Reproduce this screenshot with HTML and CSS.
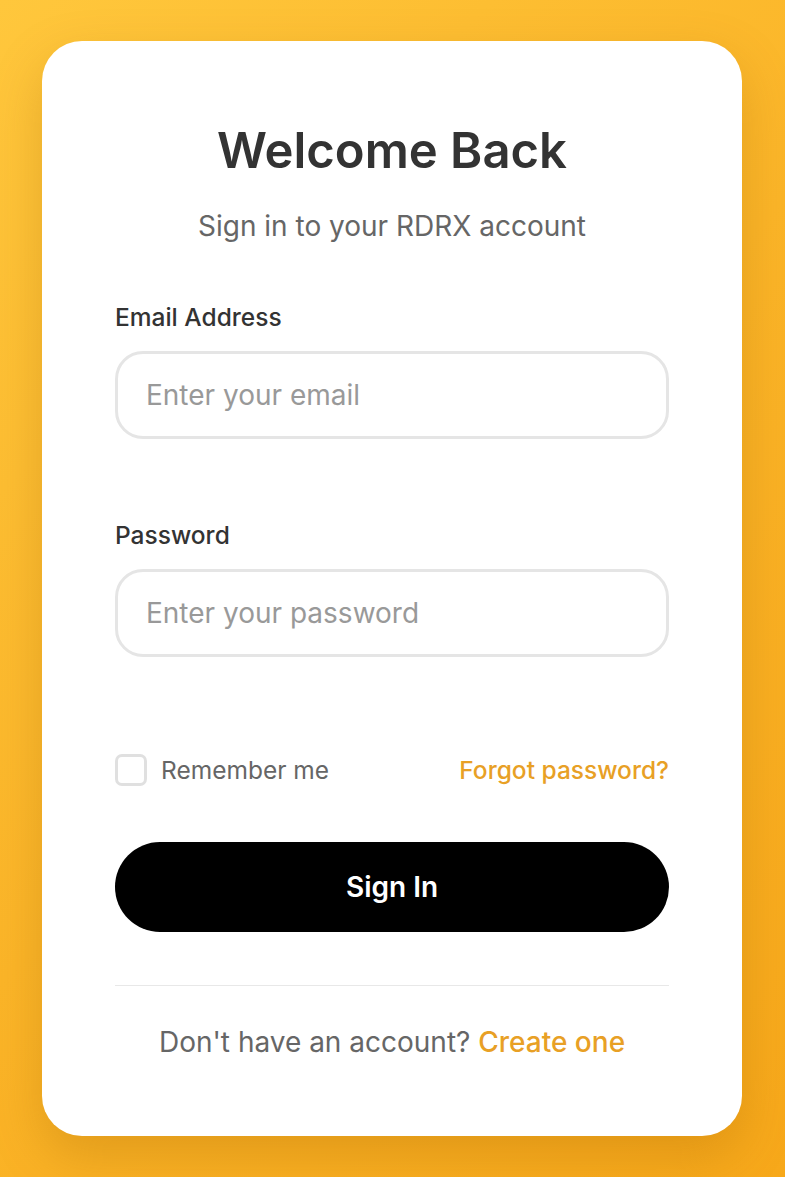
FILE: index.html
```html
<!DOCTYPE html>
<html lang="en">
<head>
<meta charset="utf-8">
<title>Sign in</title>
<link rel="stylesheet" href="styles.css">
</head>
<body>
<main class="page">
  <section class="card">
    <h1 class="title">Welcome Back</h1>
    <p class="subtitle">Sign in to your RDRX account</p>
    <form class="form">
      <div class="field">
        <label class="label" for="email">Email Address</label>
        <input class="input" id="email" type="email" placeholder="Enter your email">
      </div>
      <div class="field">
        <label class="label" for="password">Password</label>
        <input class="input" id="password" type="password" placeholder="Enter your password">
      </div>
      <div class="options">
        <label class="remember"><span class="checkbox"></span><span>Remember me</span></label>
        <a class="link" href="#">Forgot password?</a>
      </div>
      <button class="btn" type="button">Sign In</button>
    </form>
    <div class="divider"></div>
    <p class="footer">Don't have an account? <a class="link" href="#">Create one</a></p>
  </section>
</main>
</body>
</html>
```
FILE: styles.css
```css
* { box-sizing: border-box; }
html, body { margin: 0; padding: 0; }
body {
  font-family: Inter, "Noto Sans", sans-serif;
  background: linear-gradient(135deg, #ffc73c 0%, #fbb528 50%, #f7a81a 100%);
  min-height: 1177px;
}
.page {
  padding: 41px 43px 41px 42px;
}
.card {
  background: #fff;
  border-radius: 40px;
  height: 1095px;
  padding: 70px 73px 0 73px;
  box-shadow: 0 20px 50px rgba(150, 90, 0, 0.25);
}
.title {
  margin: 0;
  text-align: center;
  font-size: 49px;
  font-weight: 600;
  color: #333;
  line-height: 80px;
}
.subtitle {
  margin: 18px 0 0;
  text-align: center;
  font-size: 28px;
  color: #666;
  line-height: 34px;
}
.form { margin-top: 59px; }
.field { margin-bottom: 81px; }
.label {
  display: block;
  font-size: 24.5px;
  font-weight: 500;
  color: #333;
  line-height: 30px;
  margin-bottom: 19px;
}
.input {
  display: block;
  width: 100%;
  height: 88px;
  border: 3px solid #e5e5e5;
  border-radius: 28px;
  padding: 0 28px;
  font-family: inherit;
  font-size: 28px;
  color: #333;
  background: #fff;
  outline: none;
}
.input::placeholder { color: #999; }
.options {
  display: flex;
  justify-content: space-between;
  align-items: center;
  margin-top: 96px;
  height: 34px;
}
.remember {
  display: flex;
  align-items: center;
  gap: 14px;
  font-size: 24.5px;
  color: #666;
}
.checkbox {
  width: 32px;
  height: 32px;
  border: 3px solid #e0e0e0;
  border-radius: 7px;
}
.link {
  color: #e8a025;
  font-weight: 500;
  text-decoration: none;
  font-size: 24.5px;
}
.footer .link { font-size: 28px; }
.btn {
  display: block;
  width: 100%;
  height: 90px;
  margin-top: 55px;
  border: none;
  border-radius: 45px;
  background: #000;
  color: #fff;
  font-family: inherit;
  font-size: 28px;
  font-weight: 600;
}
.divider {
  height: 1px;
  background: #e8e8e8;
  margin-top: 53px;
}
.footer {
  margin: 39px 0 0;
  text-align: center;
  font-size: 28px;
  color: #666;
  line-height: 34px;
}
```
